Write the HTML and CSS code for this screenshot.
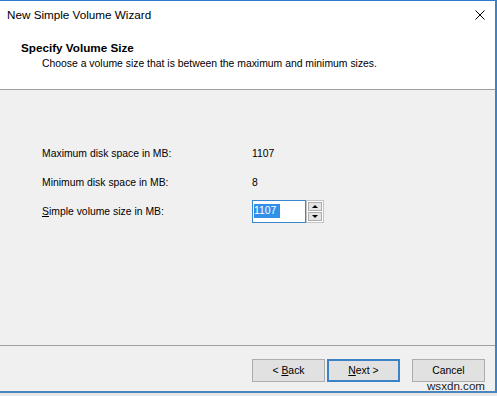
FILE: index.html
```html
<!DOCTYPE html>
<html lang="en">
<head>
  <meta charset="UTF-8">
  <title>New Simple Volume Wizard</title>
  <link rel="stylesheet" href="styles.css">
</head>
<body>

  <div class="window">
    <div class="titlebar">
      <span class="title">New Simple Volume Wizard</span>
      <svg class="close" width="10" height="10" viewBox="0 0 10 10">
        <path d="M0.5 0.5 L9.5 9.5 M9.5 0.5 L0.5 9.5" stroke="#000" stroke-width="1" fill="none"/>
      </svg>
    </div>

    <div class="header">
      <div class="header-title">Specify Volume Size</div>
      <div class="header-desc">Choose a volume size that is between the maximum and minimum sizes.</div>
    </div>

    <div class="content">
      <div class="row">
        <span class="label">Maximum disk space in MB:</span>
        <span class="value">1107</span>
      </div>
      <div class="row">
        <span class="label">Minimum disk space in MB:</span>
        <span class="value">8</span>
      </div>
      <div class="row row-input">
        <span class="label"><u>S</u>imple volume size in MB:</span>
        <div class="spinner">
          <div class="edit"><span class="selected">1107</span></div>
          <div class="spin">
            <div class="spin-btn"><span class="arrow-up"></span></div>
            <div class="spin-btn"><span class="arrow-down"></span></div>
          </div>
        </div>
      </div>
    </div>

    <div class="footer">
      <button class="btn">&lt; <u>B</u>ack</button>
      <button class="btn btn-default"><u>N</u>ext &gt;</button>
      <button class="btn btn-cancel">Cancel</button>
    </div>

    <span class="watermark">wsxdn.com</span>
  </div>

</body>
</html>
```

FILE: styles.css
```css
* {
  box-sizing: border-box;
  margin: 0;
  padding: 0;
}
body {
  font-family: 'Liberation Sans', Arial, sans-serif;
  background-color: #e8e8e8;
  color: #000;
  width: 497px;
  height: 396px;
  overflow: hidden;
}
.window {
  position: relative;
  width: 497px;
  height: 393px;
  display: flex;
  flex-direction: column;
  background-color: #f0f0f0;
  border-top: 1px solid #2b7bc6;
  border-right: 2px solid #3d84c6;
  border-bottom: 2px solid #4a86bd;
}

/* Title bar */
.titlebar {
  height: 29px;
  background-color: #fff;
  display: flex;
  justify-content: space-between;
  padding: 7px 10px 0 7px;
}
.title {
  font-size: 11.7px;
  line-height: 14px;
}
.close {
  margin-top: 2px;
}

/* Wizard header */
.header {
  height: 60px;
  background-color: #fff;
  border-bottom: 1px solid #a0a0a0;
  padding: 11px 0 0 21px;
}
.header-title {
  font-size: 11.7px;
  font-weight: bold;
  line-height: 14px;
}
.header-desc {
  font-size: 10.4px;
  line-height: 13px;
  margin: 2px 0 0 21px;
}

/* Main content */
.content {
  height: 256px;
  border-bottom: 1px solid #a0a0a0;
  padding: 57px 0 0 42px;
  font-size: 10.4px;
  line-height: 13px;
}
.row {
  display: flex;
  align-items: center;
  margin-bottom: 16px;
}
.row-input {
  margin-top: -5px;
}
.label {
  width: 210px;
}
.spinner {
  display: flex;
  height: 23px;
}
.edit {
  width: 54px;
  height: 23px;
  background-color: #fff;
  border: 1px solid #3a86cf;
  padding: 3px 0 0 1px;
  line-height: 14px;
}
.selected {
  display: inline-block;
  background-color: #3390e8;
  color: #fff;
  padding: 0 4px 0 0;
}
.spin {
  width: 18px;
  height: 23px;
  border: 1px solid #c4c4c4;
  background-color: #fff;
  padding: 1px;
  display: flex;
  flex-direction: column;
  gap: 1px;
}
.spin-btn {
  flex: 1;
  background-color: #e4e4e4;
  border: 1px solid #adadad;
  display: flex;
  align-items: center;
  justify-content: center;
}
.arrow-up {
  border-left: 3px solid transparent;
  border-right: 3px solid transparent;
  border-bottom: 3px solid #000;
}
.arrow-down {
  border-left: 3px solid transparent;
  border-right: 3px solid transparent;
  border-top: 3px solid #000;
}

/* Buttons */
.footer {
  flex: 1;
  display: flex;
  justify-content: flex-end;
  align-items: flex-start;
  gap: 2px;
  padding: 13px 10px 0 0;
}
.btn {
  width: 73px;
  height: 23px;
  font-family: 'Liberation Sans', Arial, sans-serif;
  font-size: 10.4px;
  color: #000;
  background-color: #e1e1e1;
  border: 1px solid #adadad;
}
.btn-default {
  border: 2px solid #3a83c8;
}
.btn-cancel {
  margin-left: 10px;
}

.watermark {
  position: absolute;
  right: 10px;
  bottom: -1px;
  font-size: 11.6px;
  line-height: 13px;
  color: #222;
}
```
